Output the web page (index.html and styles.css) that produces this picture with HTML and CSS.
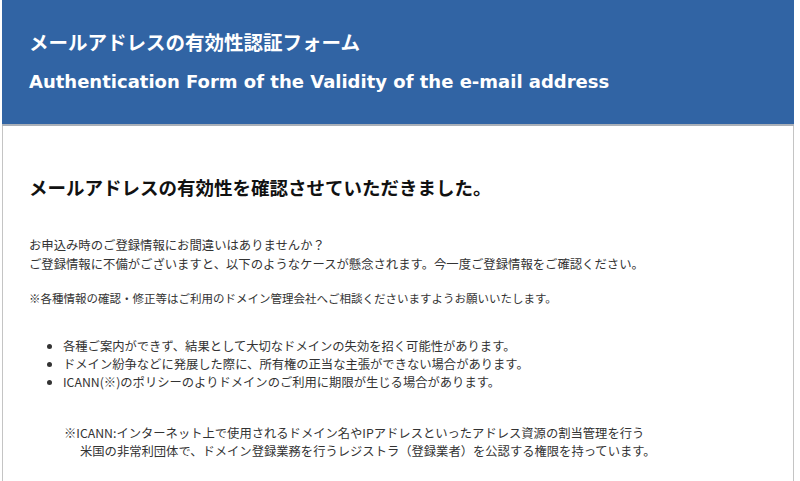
FILE: index.html
```html
<!DOCTYPE html>
<html lang="ja">
<head>
    <meta charset="UTF-8">
    <meta name="viewport" content="width=device-width, initial-scale=1.0">
    <title>メールアドレスの有効性認証フォーム</title>
    <link rel="stylesheet" href="styles.css">
</head>
<body>

<div class="page">
    <div class="header">
        <h1 class="title-ja">メールアドレスの有効性認証フォーム</h1>
        <p class="title-en">Authentication Form of the Validity of the e-mail address</p>
    </div>

    <div class="content">
        <h2>メールアドレスの有効性を確認させていただきました。</h2>

        <p class="lead">
            お申込み時のご登録情報にお間違いはありませんか？<br>
            ご登録情報に不備がございますと、以下のようなケースが懸念されます。今一度ご登録情報をご確認ください。
        </p>

        <p class="note">※各種情報の確認・修正等はご利用のドメイン管理会社へご相談くださいますようお願いいたします。</p>

        <ul class="cases">
            <li>各種ご案内ができず、結果として大切なドメインの失効を招く可能性があります。</li>
            <li>ドメイン紛争などに発展した際に、所有権の正当な主張ができない場合があります。</li>
            <li>ICANN(※)のポリシーのよりドメインのご利用に期限が生じる場合があります。</li>
        </ul>

        <p class="footnote">※ICANN:インターネット上で使用されるドメイン名やIPアドレスといったアドレス資源の割当管理を行う<br>米国の非常利団体で、ドメイン登録業務を行うレジストラ（登録業者）を公認する権限を持っています。</p>
    </div>
</div>

</body>
</html>
```

FILE: styles.css
```css
body {
    margin: 0;
    background-color: white;
    font-family: "Noto Sans CJK JP", "DejaVu Sans", sans-serif;
    color: #333;
}

.page {
    width: 790px;
    margin-left: 2px;
    border-left: 1px solid #c4c4c4;
    border-right: 1px solid #c4c4c4;
    min-height: 481px;
}

.header {
    background-color: #3164a4;
    margin: 0 -1px;
    padding: 28px 0 0 27px;
    height: 96px;
    border-bottom: 2px solid #aab0b8;
    color: white;
}

.title-ja {
    margin: 0;
    font-size: 19.5px;
    font-weight: bold;
    line-height: 28px;
}

.title-en {
    margin: 12px 0 0 0;
    font-family: "DejaVu Sans", sans-serif;
    font-size: 18px;
    font-weight: bold;
    line-height: 28px;
}

.content {
    padding: 48px 0 0 26px;
}

h2 {
    margin: 0;
    font-size: 18.5px;
    font-weight: bold;
    color: #111;
    line-height: 26px;
}

.lead {
    margin: 36px 0 0 0;
    font-size: 12.35px;
    line-height: 19px;
}

.note {
    margin: 15px 0 0 0;
    font-size: 11.5px;
    line-height: 19px;
}

.cases {
    margin: 29px 0 0 0;
    padding-left: 34px;
    font-size: 12.3px;
    line-height: 18px;
}

.footnote {
    margin: 33px 0 0 51px;
    text-indent: -16px;
    font-size: 12.3px;
    line-height: 18px;
}
```
